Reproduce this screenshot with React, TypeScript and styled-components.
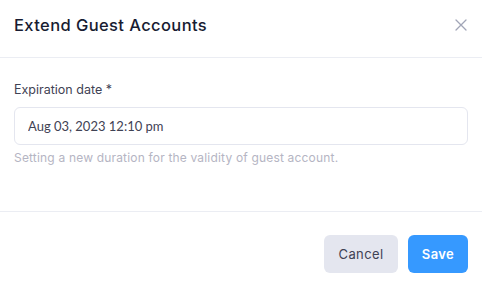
import React from "react";
import styled, { createGlobalStyle } from "styled-components";

const Global = createGlobalStyle`
  html, body { margin: 0; padding: 0; background: #ffffff; }
  body { font-family: "Inter", "Noto Sans", sans-serif; -webkit-font-smoothing: antialiased; }
  * { box-sizing: border-box; }
`;

const Modal = styled.div`
  width: 482px;
  height: 286px;
  background: #ffffff;
  display: flex;
  flex-direction: column;
`;

const Header = styled.div`
  height: 58px;
  display: flex;
  align-items: center;
  justify-content: space-between;
  padding: 0 14px 8px 14px;
  border-bottom: 1px solid #ebedf3;
`;

const Title = styled.h3`
  margin: 0;
  font-size: 16.5px;
  font-weight: 450;
  color: #181c32;
  letter-spacing: 0.4px;
`;

const CloseButton = styled.button`
  border: none;
  background: transparent;
  padding: 0;
  width: 14px;
  height: 14px;
  display: flex;
  align-items: center;
  justify-content: center;
  cursor: pointer;
`;

const Body = styled.div`
  padding: 24px 14px 0 14px;
  height: 154px;
  border-bottom: 1px solid #ebedf3;
  display: flex;
  flex-direction: column;
`;

const Label = styled.label`
  font-size: 12.5px;
  color: #3f4254;
  font-weight: 400;
  line-height: 16px;
  margin-bottom: 9px;
`;

const Input = styled.input`
  width: 454px;
  height: 38px;
  border: 1px solid #e4e6ef;
  border-radius: 6px;
  padding: 0 13px;
  font-family: "Lato", "Inter", sans-serif;
  font-size: 13px;
  color: #3f4254;
  outline: none;
  background: #ffffff;
`;

const Hint = styled.div`
  margin-top: 6px;
  font-size: 12px;
  letter-spacing: 0.18px;
  color: #b5b5c3;
  line-height: 14px;
`;

const Footer = styled.div`
  flex: 1;
  display: flex;
  justify-content: flex-end;
  align-items: flex-start;
  gap: 10px;
  padding: 23px 14px 0 14px;
`;

const Button = styled.button<{ $primary?: boolean }>`
  height: 38px;
  border: none;
  border-radius: 6px;
  padding: 0 12px;
  font-family: inherit;
  font-size: 13px;
  letter-spacing: 0.4px;
  font-weight: ${(p) => (p.$primary ? 600 : 400)};
  background: ${(p) => (p.$primary ? "#3699ff" : "#e4e6ef")};
  color: ${(p) => (p.$primary ? "#ffffff" : "#3f4254")};
  cursor: pointer;
  min-width: ${(p) => (p.$primary ? "60px" : "74px")};
`;

export default function App() {
  return (
    <>
      <Global />
      <Modal>
        <Header>
          <Title>Extend Guest Accounts</Title>
          <CloseButton aria-label="Close">
            <svg width="12" height="12" viewBox="0 0 12 12">
              <path d="M1 1 L11 11 M11 1 L1 11" stroke="#a1a5b7" strokeWidth="1.3" strokeLinecap="round" />
            </svg>
          </CloseButton>
        </Header>
        <Body>
          <Label>Expiration date *</Label>
          <Input defaultValue="Aug 03, 2023 12:10 pm" readOnly />
          <Hint>Setting a new duration for the validity of guest account.</Hint>
        </Body>
        <Footer>
          <Button>Cancel</Button>
          <Button $primary>Save</Button>
        </Footer>
      </Modal>
    </>
  );
}
